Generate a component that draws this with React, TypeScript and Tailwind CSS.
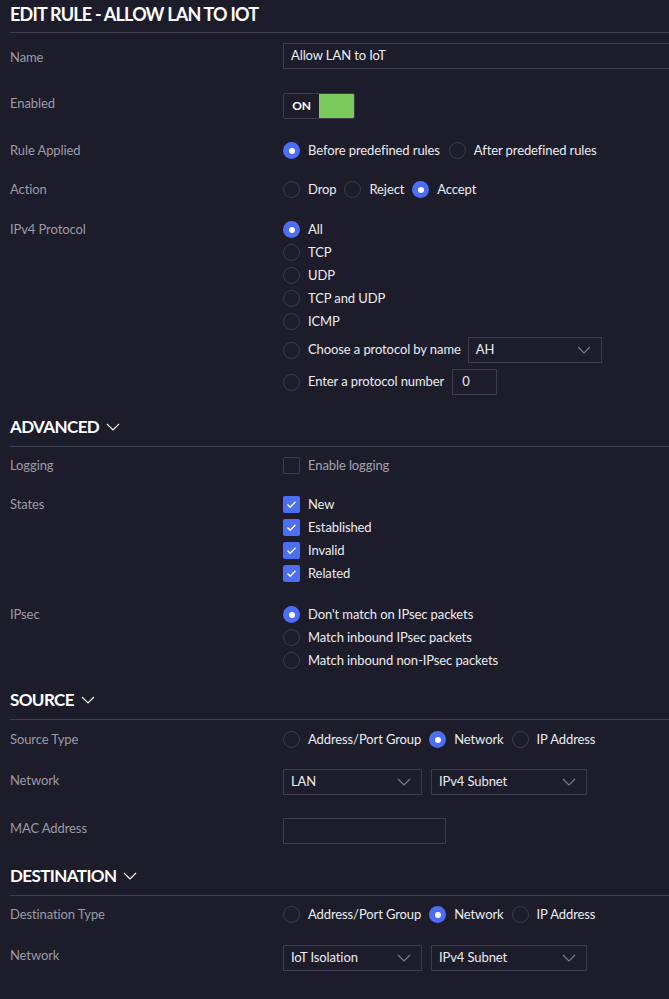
import React from 'react';

const font = { fontFamily: 'Lato, "Open Sans", sans-serif' };

function Radio({ checked }: { checked?: boolean }) {
  return checked ? (
    <span className="flex h-[17px] w-[17px] shrink-0 items-center justify-center rounded-full bg-[#4c6ef5]">
      <span className="h-[6px] w-[6px] rounded-full bg-white" />
    </span>
  ) : (
    <span className="h-[17px] w-[17px] shrink-0 rounded-full border border-[#3c3c4c]" />
  );
}

function Check({ checked }: { checked?: boolean }) {
  return checked ? (
    <span className="flex h-[17px] w-[17px] shrink-0 items-center justify-center rounded-[2px] bg-[#4c6ef5]">
      <svg width="11" height="9" viewBox="0 0 11 9" fill="none">
        <path d="M1.5 4.5 L4.2 7.2 L9.5 1.8" stroke="white" strokeWidth="1.4" />
      </svg>
    </span>
  ) : (
    <span className="h-[17px] w-[17px] shrink-0 rounded-[2px] border border-[#3c3c4c]" />
  );
}

function Option({ checked, label, check, dim }: { checked?: boolean; label: string; check?: boolean; dim?: boolean }) {
  return (
    <label className="flex h-[23px] shrink-0 items-center gap-2 whitespace-nowrap">
      {check ? <Check checked={checked} /> : <Radio checked={checked} />}
      <span className={dim ? 'text-[#a3a3ad]' : 'text-[#ececf1]'}>{label}</span>
    </label>
  );
}

function Chevron({ color = '#7c7c8a', w = 14 }: { color?: string; w?: number }) {
  return (
    <svg width={w} height="8" viewBox="0 0 14 8" fill="none">
      <path d="M1 1 L7 7 L13 1" stroke={color} strokeWidth="1.2" />
    </svg>
  );
}

function Select({ value, width }: { value: string; width: string }) {
  return (
    <div className={`flex h-[26px] shrink-0 items-center justify-between border border-[#3c3c4e] pl-[7px] pr-[10px] text-[#ececf1] ${width}`}>
      <span>{value}</span>
      <Chevron />
    </div>
  );
}

function Row({ label, top, lead = 'leading-[23px]', children }: { label: string; top: string; lead?: string; children: React.ReactNode }) {
  return (
    <div className={`flex pl-[10px] ${top}`}>
      <div className={`w-[273px] shrink-0 text-[#9b9ba6] ${lead}`}>{label}</div>
      <div className="flex flex-col">{children}</div>
    </div>
  );
}

function Section({ title, top }: { title: string; top: string }) {
  return (
    <div className={`ml-[10px] flex items-center gap-[7px] border-b border-[#3e3e4e] pb-[8px] ${top}`}>
      <span className="text-[17px] font-bold leading-[22px] tracking-[-0.6px] text-white">{title}</span>
      <Chevron color="#ffffff" w={14} />
    </div>
  );
}

export default function App() {
  return (
    <div className="h-[999px] w-[669px] overflow-hidden bg-[#1d1c2b] text-[13px] tracking-[-0.1px]" style={font}>
      <div className="ml-[10px] flex h-[33px] items-start border-b border-[#3e3e4e] pt-[3px]">
        <h1 className="text-[18px] font-bold leading-[22px] tracking-[-0.8px] text-white">EDIT RULE - ALLOW LAN TO IOT</h1>
      </div>

      <Row label="Name" top="mt-[10px]" lead="leading-[26px] pt-[1px]">
        <div className="flex h-[26px] w-[420px] items-center border border-[#3c3c4e] px-[7px] text-[#ececf1]">Allow LAN to IoT</div>
      </Row>

      <Row label="Enabled" top="mt-[23px]" lead="leading-[20px]">
        <div className="flex h-[26px] w-[72px] overflow-hidden rounded-[2px] border border-[#3c3c4e]">
          <span className="flex w-[35px] items-center justify-center text-[12px] font-bold text-white">ON</span>
          <span className="flex-1 bg-[#7acb5c]" />
        </div>
      </Row>

      <Row label="Rule Applied" top="mt-[20px]">
        <div className="flex gap-[9px]">
          <Option checked label="Before predefined rules" />
          <Option label="After predefined rules" />
        </div>
      </Row>

      <Row label="Action" top="mt-[16px]">
        <div className="flex gap-[8px]">
          <Option label="Drop" />
          <Option label="Reject" />
          <Option checked label="Accept" />
        </div>
      </Row>

      <Row label="IPv4 Protocol" top="mt-[17px]">
        <Option checked label="All" />
        <Option label="TCP" />
        <Option label="UDP" />
        <Option label="TCP and UDP" />
        <Option label="ICMP" />
        <div className="mt-[4px] flex items-center gap-[7px]">
          <Option label="Choose a protocol by name" />
          <Select value="AH" width="w-[134px]" />
        </div>
        <div className="mt-[6px] flex items-center gap-[8px]">
          <Option label="Enter a protocol number" />
          <div className="flex h-[26px] w-[45px] items-center border border-[#3c3c4e] px-[9px] text-[#ececf1]">0</div>
        </div>
      </Row>

      <Section title="ADVANCED" top="mt-[21px]" />

      <Row label="Logging" top="mt-[7px]">
        <Option check dim label="Enable logging" />
      </Row>

      <Row label="States" top="mt-[16px]">
        <Option check checked label="New" />
        <Option check checked label="Established" />
        <Option check checked label="Invalid" />
        <Option check checked label="Related" />
      </Row>

      <Row label="IPsec" top="mt-[18px]">
        <Option checked label="Don't match on IPsec packets" />
        <Option label="Match inbound IPsec packets" />
        <Option label="Match inbound non-IPsec packets" />
      </Row>

      <Section title="SOURCE" top="mt-[17px]" />

      <Row label="Source Type" top="mt-[8px]">
        <div className="flex gap-[8px]">
          <Option label="Address/Port Group" />
          <Option checked label="Network" />
          <Option label="IP Address" />
        </div>
      </Row>

      <Row label="Network" top="mt-[18px]" lead="leading-[22px]">
        <div className="flex gap-[9px]">
          <Select value="LAN" width="w-[139px]" />
          <Select value="IPv4 Subnet" width="w-[156px]" />
        </div>
      </Row>

      <Row label="MAC Address" top="mt-[23px]" lead="leading-[20px]">
        <div className="h-[26px] w-[163px] border border-[#3c3c4e]" />
      </Row>

      <Section title="DESTINATION" top="mt-[21px]" />

      <Row label="Destination Type" top="mt-[7px]">
        <div className="flex gap-[8px]">
          <Option label="Address/Port Group" />
          <Option checked label="Network" />
          <Option label="IP Address" />
        </div>
      </Row>

      <Row label="Network" top="mt-[19px]" lead="leading-[20px]">
        <div className="flex gap-[9px]">
          <Select value="IoT Isolation" width="w-[139px]" />
          <Select value="IPv4 Subnet" width="w-[156px]" />
        </div>
      </Row>
    </div>
  );
}
